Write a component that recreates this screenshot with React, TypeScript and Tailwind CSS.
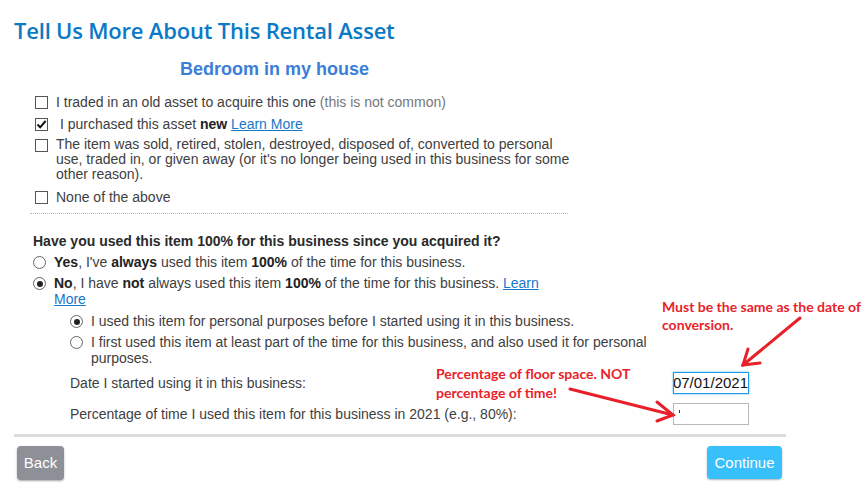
import React from "react";

const body = "font-['Liberation_Sans',Arial,sans-serif]";

function Check({ checked = false }: { checked?: boolean }) {
  return (
    <span className="mt-[2px] flex h-[13px] w-[13px] shrink-0 items-center justify-center border border-[#555] bg-white">
      {checked && (
        <svg width="11" height="11" viewBox="0 0 11 11">
          <path d="M1.5 5.5 L4.2 8.3 L9.6 2" fill="none" stroke="#111" strokeWidth="2" />
        </svg>
      )}
    </span>
  );
}

function Radio({ on = false }: { on?: boolean }) {
  return (
    <span className="mt-[2px] flex h-[13px] w-[13px] shrink-0 items-center justify-center rounded-full border border-[#666] bg-white">
      {on && <span className="h-[6px] w-[6px] rounded-full bg-[#222]" />}
    </span>
  );
}

export default function App() {
  return (
    <div className={`relative h-[484px] w-[866px] overflow-hidden bg-white text-[14px] leading-[16px] text-[#404040] ${body}`}>
      <div className="w-[772px] pl-[14px] box-content">
        <h1 className="pt-[17px] font-['Open_Sans',sans-serif] text-[22px] font-semibold leading-[27px] tracking-[-0.2px] text-[#0a79c6]">
          Tell Us More About This Rental Asset
        </h1>
        <h2 className="mt-[15px] pl-[166px] text-[18px] font-bold leading-[20px] text-[#3b7ed8]">
          Bedroom in my house
        </h2>

        {/* asset status checkboxes */}
        <div className="mt-[15px] pl-[21px]">
          <div className="flex gap-[8px]">
            <Check />
            <span>
              I traded in an old asset to acquire this one <span className="text-[#777]">(this is not common)</span>
            </span>
          </div>
          <div className="mt-[6px] flex gap-[8px]">
            <Check checked />
            <span>
              &nbsp;I purchased this asset <b className="text-[#222]">new</b>{" "}
              <a className="text-[#1777c9] underline">Learn More</a>
            </span>
          </div>
          <div className="mt-[5px] flex gap-[8px]">
            <Check />
            <span className="w-[516px] leading-[15px]">
              The item was sold, retired, stolen, destroyed, disposed of, converted to personal use, traded in, or given away
              (or it's no longer being used in this business for some other reason).
            </span>
          </div>
          <div className="mt-[7px] flex gap-[8px]">
            <Check />
            <span>None of the above</span>
          </div>
          <div className="mt-[8px] w-[538px] -ml-[5px] border-t border-dotted border-[#bbb]" />
        </div>

        {/* business use */}
        <div className="mt-[19px] pl-[19px]">
          <p className="font-bold text-[#2a2a2a]">Have you used this item 100% for this business since you acquired it?</p>
          <div className="mt-[5px] flex gap-[8px]">
            <Radio />
            <span>
              <b className="text-[#222]">Yes</b>, I've <b className="text-[#222]">always</b> used this item{" "}
              <b className="text-[#222]">100%</b> of the time for this business.
            </span>
          </div>
          <div className="mt-[5px] flex gap-[8px]">
            <Radio on />
            <span className="w-[500px]">
              <b className="text-[#222]">No</b>, I have <b className="text-[#222]">not</b> always used this item{" "}
              <b className="text-[#222]">100%</b> of the time for this business.{" "}
              <a className="text-[#1777c9] underline">Learn More</a>
            </span>
          </div>

          <div className="pl-[37px]">
            <div className="mt-[6px] flex gap-[8px]">
              <Radio on />
              <span>I used this item for personal purposes before I started using it in this business.</span>
            </div>
            <div className="mt-[5px] flex gap-[8px]">
              <Radio />
              <span className="w-[565px]">
                I first used this item at least part of the time for this business, and also used it for personal purposes.
              </span>
            </div>
          </div>

          <div className="pl-[37px]">
            <div className="mt-[6px] flex h-[22px] items-center">
              <span className="w-[603px]">Date I started using it in this business:</span>
              <div className="flex h-[22px] w-[76px] items-center justify-end overflow-hidden border border-[#1b9be8] text-[15px] text-[#111] shadow-[0_0_2px_#5bb8f0]">
                <span className="whitespace-nowrap">07/01/2021</span>
              </div>
            </div>
            <div className="mt-[9px] flex h-[22px] items-center">
              <span className="w-[603px]">Percentage of time I used this item for this business in 2021 (e.g., 80%):</span>
              <div className="relative h-[22px] w-[76px] border border-[#b8b8b8] bg-white">
                <span className="absolute left-[5px] top-[6px] h-[3px] w-px bg-[#333]" />
              </div>
            </div>
          </div>
        </div>

        <div className="mt-[9px] h-[3px] bg-[#dcdcdc]" />

        <div className="mt-[9px] flex items-start justify-between px-[3px]">
          <button className="h-[34px] w-[47px] rounded-[4px] bg-[#8d9096] text-[15px] text-white shadow-[0_1px_2px_rgba(0,0,0,0.35)]">
            Back
          </button>
          <button className="mr-[1px] h-[33px] w-[75px] rounded-[4px] bg-[#37c0fb] text-[15px] text-white shadow-[0_1px_2px_rgba(0,0,0,0.3)]">
            Continue
          </button>
        </div>
      </div>

      {/* red notes laid over the form */}
      <div className="absolute left-[662px] top-[298px] font-['Lato',sans-serif] text-[14px] font-bold leading-[18px] text-[#e8232b]">
        Must be the same as the date of
        <br />
        conversion.
      </div>
      <div className="absolute left-[436px] top-[364px] font-['Lato',sans-serif] text-[14px] font-bold leading-[19px] text-[#e8232b]">
        Percentage of floor space. NOT
        <br />
        percentage of time!
      </div>
      <svg className="pointer-events-none absolute left-0 top-0" width="866" height="484">
        <g stroke="#e8202a" strokeWidth="3" strokeLinecap="round" fill="none">
          <path d="M800 318 L743 365" />
          <path d="M748 349 L743 365 L760 363" />
          <path d="M570 389 L673 415" />
          <path d="M657 402 L673 415 L657 421" />
        </g>
      </svg>
    </div>
  );
}
